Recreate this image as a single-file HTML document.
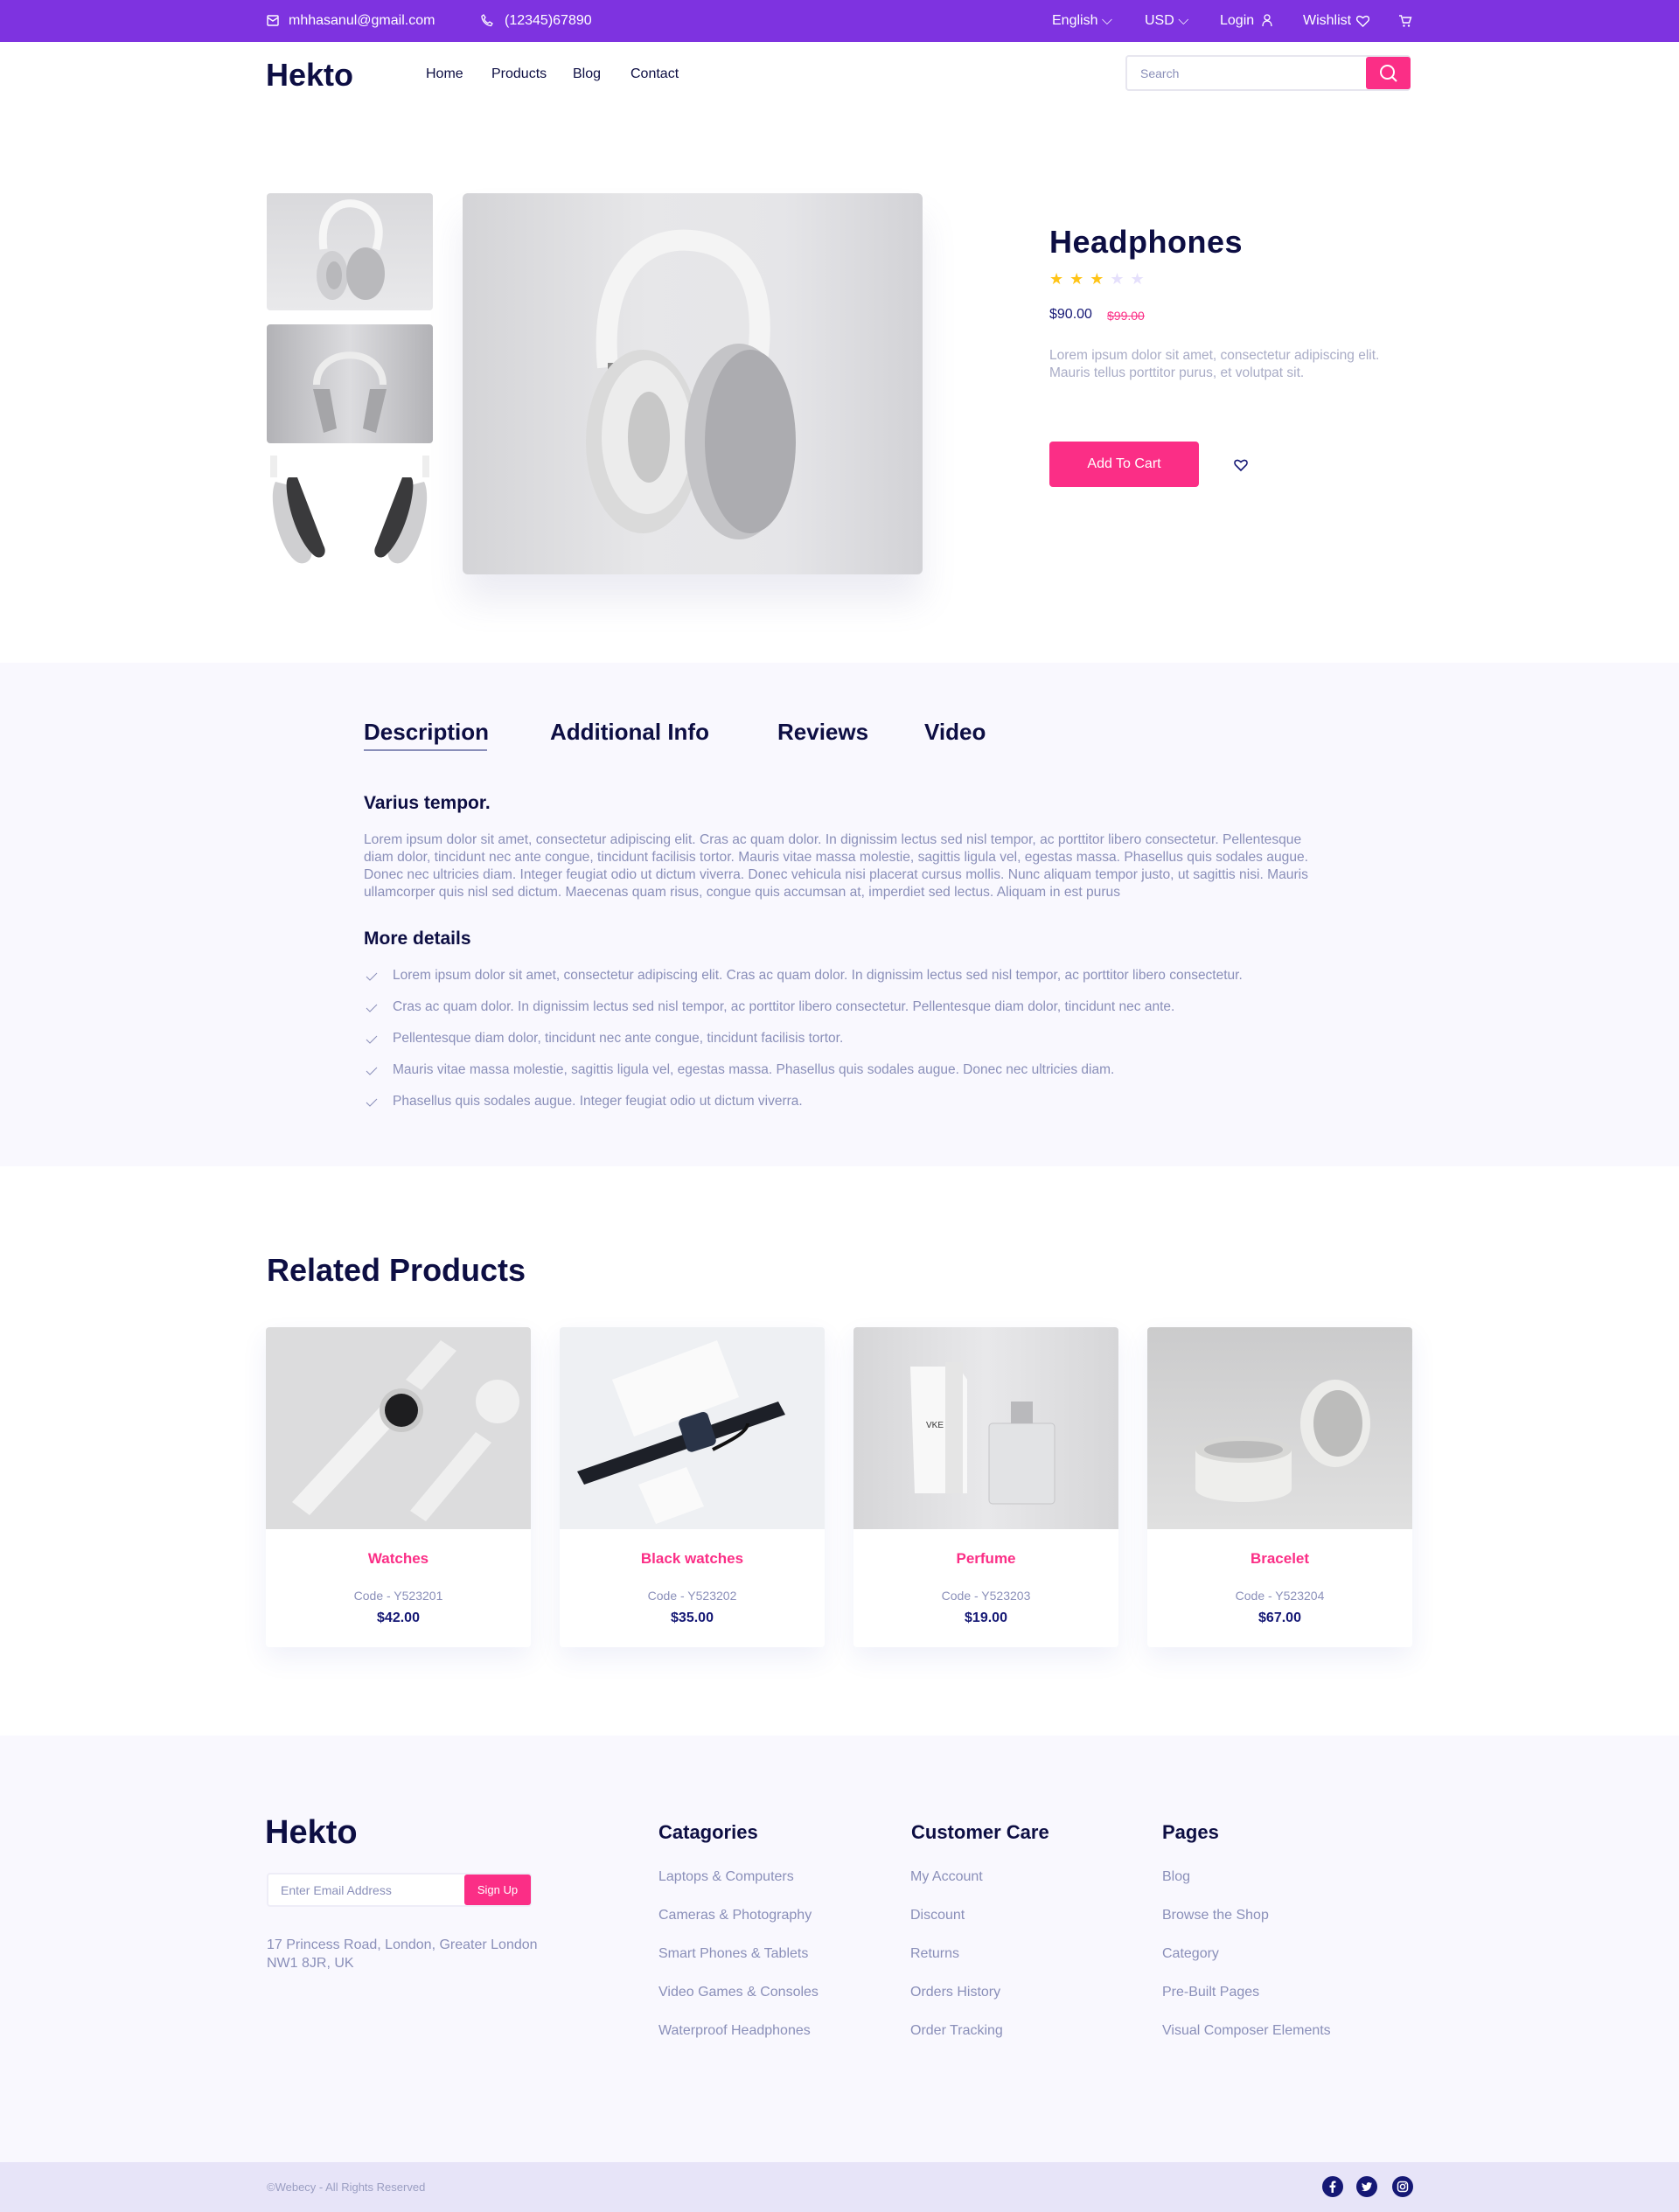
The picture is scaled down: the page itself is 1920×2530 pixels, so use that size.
<!DOCTYPE html>
<html><head><meta charset="utf-8"><style>
*{margin:0;padding:0;box-sizing:border-box}
body{width:1920px;height:2530px;position:relative;background:#fff;font-family:"Liberation Sans",sans-serif;color:#0D0E43;overflow:hidden}
.a{position:absolute;white-space:nowrap}
.top{position:absolute;left:0;top:0;width:1920px;height:48px;background:#7E33E0;color:#fff;font-size:16px}
.card{position:absolute;top:1518px;width:303px;height:366px;background:#fff;border-radius:4px;box-shadow:0 12px 30px rgba(49,64,180,.08);text-align:center}
.card .img{height:231px;border-radius:4px 4px 0 0}
.card .n{position:absolute;left:0;right:0;top:255px;color:#FB2E86;font-size:17px;font-weight:bold}
.card .c{position:absolute;left:0;right:0;top:299px;color:#8A8FB9;font-size:14px}
.card .p{position:absolute;left:0;right:0;top:324px;color:#151875;font-size:16px;font-weight:bold}
.fl{position:absolute;font-size:16px;color:#8A8FB9}
.fh{position:absolute;top:2083px;font-size:22px;font-weight:bold;color:#0D0E43}
.li{position:absolute;left:449px;font-size:15.5px;color:#8A8FB9}
.ck{position:absolute;left:418px;width:14px;height:10px}
</style></head><body>
<div class="top">
 <svg class="a" style="left:305px;top:17px" width="14" height="13" viewBox="0 0 14 13"><rect x="1" y="1" width="12" height="11" rx="1" fill="none" stroke="#fff" stroke-width="1.4"/><path d="M1 3l6 4 6-4" fill="none" stroke="#fff" stroke-width="1.4"/></svg>
 <span class="a" style="left:330px;top:15px">mhhasanul@gmail.com</span>
 <svg class="a" style="left:550px;top:16px" width="14" height="15" viewBox="0 0 14 15"><path d="M3 1l2 3-1.5 2c1 2 2.5 3.5 4.5 4.5l2-1.5 3 2-1.5 2.5C6 13 1 8 1 2.5z" fill="none" stroke="#fff" stroke-width="1.3"/></svg>
 <span class="a" style="left:577px;top:15px">(12345)67890</span>
 <span class="a" style="left:1203px;top:15px">English ⌵</span>
 <span class="a" style="left:1309px;top:15px">USD ⌵</span>
 <span class="a" style="left:1395px;top:15px">Login</span>
 <svg class="a" style="left:1443px;top:16px" width="12" height="15" viewBox="0 0 12 15"><circle cx="6" cy="4" r="3" fill="none" stroke="#fff" stroke-width="1.3"/><path d="M1 14c0-4 2-6 5-6s5 2 5 6" fill="none" stroke="#fff" stroke-width="1.3"/></svg>
 <span class="a" style="left:1490px;top:15px">Wishlist</span>
 <svg class="a" style="left:1551px;top:17px" width="15" height="14" viewBox="0 0 15 14"><path d="M7.5 13L1.5 7C-1 4 2-1 7.5 3.5 13-1 16 4 13.5 7z" fill="none" stroke="#fff" stroke-width="1.4"/></svg>
 <svg class="a" style="left:1599px;top:16px" width="16" height="16" viewBox="0 0 16 16"><path d="M1 2h2.5l2 8h7l2-6H5" fill="none" stroke="#fff" stroke-width="1.4"/><circle cx="6.5" cy="13.5" r="1.2" fill="#fff"/><circle cx="12" cy="13.5" r="1.2" fill="#fff"/></svg>
</div>
<div class="a" style="left:304px;top:65px;font-size:36px;font-weight:bold">Hekto</div>
<span class="a" style="left:487px;top:76px;font-size:16px">Home</span>
<span class="a" style="left:562px;top:76px;font-size:16px">Products</span>
<span class="a" style="left:655px;top:76px;font-size:16px">Blog</span>
<span class="a" style="left:721px;top:76px;font-size:16px">Contact</span>
<div class="a" style="left:1287px;top:63px;width:326px;height:41px;border:2px solid #E7E6EF;border-radius:4px"></div>
<span class="a" style="left:1304px;top:76px;font-size:14px;color:#8A8FB9">Search</span>
<div class="a" style="left:1562px;top:65px;width:51px;height:37px;background:#FB2E86;border-radius:3px"><svg style="position:absolute;left:15px;top:8px" width="22" height="22" viewBox="0 0 22 22"><circle cx="9.5" cy="9.5" r="7.5" fill="none" stroke="#fff" stroke-width="2"/><path d="M15 15l5 5" stroke="#fff" stroke-width="2"/></svg></div>

<div class="a" style="left:305px;top:221px;width:190px;height:134px;border-radius:4px;background:linear-gradient(#d9d9dc,#e9e9eb)"></div>
<svg class="a" style="left:350px;top:225px" width="100" height="125" viewBox="0 0 100 125"><path d="M20 60C15 20 35 5 55 8s35 20 25 52" fill="none" stroke="#f6f6f6" stroke-width="9"/><ellipse cx="30" cy="90" rx="18" ry="28" fill="#cfcfd2"/><ellipse cx="32" cy="90" rx="9" ry="16" fill="#b8b8bb"/><ellipse cx="68" cy="88" rx="22" ry="30" fill="#b9b9bc"/></svg>
<div class="a" style="left:305px;top:371px;width:190px;height:136px;border-radius:4px;background:linear-gradient(90deg,#b2b2b6,#dcdcdf 50%,#b2b2b6)"></div>
<svg class="a" style="left:340px;top:375px" width="120" height="130" viewBox="0 0 120 130"><path d="M22 65C22 20 98 20 98 65" fill="none" stroke="#ececec" stroke-width="8"/><path d="M18 70l12 50 15-5-8-45z" fill="#a5a5a8"/><path d="M102 70l-12 50-15-5 8-45z" fill="#a5a5a8"/></svg>
<svg class="a" style="left:305px;top:521px" width="190" height="126" viewBox="0 0 190 126"><path d="M4 0h8v25H4z" fill="#eee"/><path d="M178 0h8v25h-8z" fill="#eee"/><path d="M10 30c-10 20 5 80 25 92 10 5 20-5 15-15L30 35z" fill="#cfcfd1"/><path d="M25 25c-8 5 5 70 30 90 8 5 15-3 10-12L35 25z" fill="#3a3a3c"/><path d="M180 30c10 20-5 80-25 92-10 5-20-5-15-15l20-72z" fill="#cfcfd1"/><path d="M165 25c8 5-5 70-30 90-8 5-15-3-10-12l30-78z" fill="#3a3a3c"/></svg>
<div class="a" style="left:529px;top:221px;width:526px;height:436px;border-radius:6px;background:linear-gradient(90deg,#d4d4d7,#e7e7e9 40%,#e5e5e8 70%,#d2d2d6);box-shadow:0 30px 40px rgba(120,120,170,.14)"></div>
<svg class="a" style="left:640px;top:260px" width="300" height="360" viewBox="0 0 300 360"><path d="M55 160C45 60 90 10 150 15s90 50 75 145" fill="none" stroke="#f4f4f4" stroke-width="24"/><rect x="55" y="155" width="8" height="22" fill="#888"/><rect x="222" y="155" width="8" height="22" fill="#888"/><ellipse cx="95" cy="245" rx="65" ry="105" fill="#dadada"/><ellipse cx="100" cy="240" rx="52" ry="88" fill="#ececec"/><ellipse cx="102" cy="240" rx="24" ry="52" fill="#c8c8c8"/><ellipse cx="205" cy="245" rx="62" ry="112" fill="#c4c4c7"/><ellipse cx="218" cy="245" rx="52" ry="105" fill="#acacb0"/></svg>

<div class="a" style="left:1200px;top:256px;font-size:36px;font-weight:bold;letter-spacing:.5px">Headphones</div>
<div class="a" style="left:1200px;top:309px;font-size:18px;letter-spacing:7px"><span style="color:#FFC416">★★★</span><span style="color:#E5E0FC">★★</span></div>
<span class="a" style="left:1200px;top:351px;font-size:16px;color:#151875">$90.00</span>
<span class="a" style="left:1266px;top:353px;font-size:14px;color:#FB2E86;text-decoration:line-through">$99.00</span>
<div class="a" style="left:1200px;top:397px;font-size:15.5px;line-height:20px;color:#A9ACC6">Lorem ipsum dolor sit amet, consectetur adipiscing elit.<br>Mauris tellus porttitor purus, et volutpat sit.</div>
<div class="a" style="left:1200px;top:505px;width:171px;height:52px;background:#FB2E86;border-radius:4px;color:#fff;font-size:16px;text-align:center;line-height:52px">Add To Cart</div>
<svg class="a" style="left:1411px;top:525px" width="16" height="14" viewBox="0 0 16 14"><path d="M8 13L2 7C-1 3 3-1 8 3.5 13-1 17 3 14 7z" fill="none" stroke="#151875" stroke-width="1.6"/></svg>

<div class="a" style="left:0;top:758px;width:1920px;height:576px;background:#F9F8FE"></div>
<span class="a" style="left:416px;top:822px;font-size:26px;font-weight:bold">Description</span>
<div class="a" style="left:416px;top:857px;width:141px;height:2px;background:#8A8FB9"></div>
<span class="a" style="left:629px;top:822px;font-size:26px;font-weight:bold">Additional Info</span>
<span class="a" style="left:889px;top:822px;font-size:26px;font-weight:bold">Reviews</span>
<span class="a" style="left:1057px;top:822px;font-size:26px;font-weight:bold">Video</span>
<span class="a" style="left:416px;top:907px;font-size:21px;font-weight:bold">Varius tempor.</span>
<div class="a" style="left:416px;top:951px;width:1090px;white-space:normal;font-size:15.6px;line-height:20px;color:#8A8FB9">Lorem ipsum dolor sit amet, consectetur adipiscing elit. Cras ac quam dolor. In dignissim lectus sed nisl tempor, ac porttitor libero consectetur. Pellentesque diam dolor, tincidunt nec ante congue, tincidunt facilisis tortor. Mauris vitae massa molestie, sagittis ligula vel, egestas massa. Phasellus quis sodales augue. Donec nec ultricies diam. Integer feugiat odio ut dictum viverra. Donec vehicula nisi placerat cursus mollis. Nunc aliquam tempor justo, ut sagittis nisi. Mauris ullamcorper quis nisl sed dictum. Maecenas quam risus, congue quis accumsan at, imperdiet sed lectus. Aliquam in est purus</div>
<span class="a" style="left:416px;top:1062px;font-size:21px;font-weight:bold">More details</span>
<svg class="ck" style="top:1112px" viewBox="0 0 14 10"><path d="M1 5l4 4 8-8" fill="none" stroke="#8A8FB9" stroke-width="1"/></svg>
<span class="li a" style="top:1107px">Lorem ipsum dolor sit amet, consectetur adipiscing elit. Cras ac quam dolor. In dignissim lectus sed nisl tempor, ac porttitor libero consectetur.</span>
<svg class="ck" style="top:1148px" viewBox="0 0 14 10"><path d="M1 5l4 4 8-8" fill="none" stroke="#8A8FB9" stroke-width="1"/></svg>
<span class="li a" style="top:1143px">Cras ac quam dolor. In dignissim lectus sed nisl tempor, ac porttitor libero consectetur. Pellentesque diam dolor, tincidunt nec ante.</span>
<svg class="ck" style="top:1184px" viewBox="0 0 14 10"><path d="M1 5l4 4 8-8" fill="none" stroke="#8A8FB9" stroke-width="1"/></svg>
<span class="li a" style="top:1179px">Pellentesque diam dolor, tincidunt nec ante congue, tincidunt facilisis tortor.</span>
<svg class="ck" style="top:1220px" viewBox="0 0 14 10"><path d="M1 5l4 4 8-8" fill="none" stroke="#8A8FB9" stroke-width="1"/></svg>
<span class="li a" style="top:1215px">Mauris vitae massa molestie, sagittis ligula vel, egestas massa. Phasellus quis sodales augue. Donec nec ultricies diam.</span>
<svg class="ck" style="top:1256px" viewBox="0 0 14 10"><path d="M1 5l4 4 8-8" fill="none" stroke="#8A8FB9" stroke-width="1"/></svg>
<span class="li a" style="top:1251px">Phasellus quis sodales augue. Integer feugiat odio ut dictum viverra.</span>

<div class="a" style="left:305px;top:1432px;font-size:36px;font-weight:bold">Related Products</div>
<div class="card" style="left:304px"><div class="img" style="background:#dcdcdd;position:relative"><svg style="position:absolute;left:0;top:0" width="303" height="231" viewBox="0 0 303 231"><path d="M30 200L150 70l20 15L50 215z" fill="#f2f2f2"/><path d="M160 60l40-45 18 12-40 45z" fill="#eee"/><circle cx="155" cy="95" r="25" fill="#c8c8c8"/><circle cx="155" cy="95" r="19" fill="#1e1e20"/><path d="M165 210l75-90 18 12-75 90z" fill="#efefef"/><circle cx="265" cy="85" r="25" fill="#f0f0f0"/></svg></div><div class="n">Watches</div><div class="c">Code - Y523201</div><div class="p">$42.00</div></div>
<div class="card" style="left:640px"><div class="img" style="background:#eef0f3;position:relative"><svg style="position:absolute;left:0;top:0" width="303" height="231" viewBox="0 0 303 231"><path d="M60 60l120-45 25 65-120 45z" fill="#fafafa"/><path d="M20 165l230-80 8 15-230 80z" fill="#1d2028"/><rect x="140" y="100" width="35" height="40" rx="6" fill="#2a3448" transform="rotate(-18 157 120)"/><path d="M90 180l55-20 20 45-55 20z" fill="#fafafa"/><path d="M175 140c20-10 40-20 40-30" fill="none" stroke="#111" stroke-width="4"/></svg></div><div class="n">Black watches</div><div class="c">Code - Y523202</div><div class="p">$35.00</div></div>
<div class="card" style="left:976px"><div class="img" style="background:linear-gradient(90deg,#d6d6d8,#e8e8ea,#d6d6d8);position:relative"><svg style="position:absolute;left:0;top:0" width="303" height="231" viewBox="0 0 303 231"><path d="M65 45h55l10 15v130H70z" fill="#f8f8f8"/><rect x="105" y="40" width="20" height="150" fill="#e5e5e5"/><rect x="155" y="110" width="75" height="92" rx="4" fill="#e2e3e5" stroke="#c5c5c8"/><rect x="180" y="85" width="25" height="25" fill="#b9b9bc"/><text x="83" y="115" font-size="10" fill="#333" font-family="Liberation Sans">VKE</text></svg></div><div class="n">Perfume</div><div class="c">Code - Y523203</div><div class="p">$19.00</div></div>
<div class="card" style="left:1312px"><div class="img" style="background:linear-gradient(#cbcbcc,#e0e0e0);position:relative"><svg style="position:absolute;left:0;top:0" width="303" height="231" viewBox="0 0 303 231"><path d="M55 140h110v45a55 15 0 0 1-110 0z" fill="#eeeeec"/><ellipse cx="110" cy="140" rx="55" ry="15" fill="#d8d8d6"/><ellipse cx="110" cy="140" rx="45" ry="10" fill="#bbb"/><ellipse cx="215" cy="110" rx="40" ry="50" fill="#ececea"/><ellipse cx="218" cy="110" rx="28" ry="38" fill="#bcbcbb"/></svg></div><div class="n">Bracelet</div><div class="c">Code - Y523204</div><div class="p">$67.00</div></div>

<div class="a" style="left:0;top:1985px;width:1920px;height:488px;background:#F9F8FE"></div>
<div class="a" style="left:303px;top:2075px;font-size:38px;font-weight:bold">Hekto</div>
<div class="a" style="left:305px;top:2142px;width:303px;height:39px;background:#fff;border:2px solid #EEEDF7;border-radius:4px"></div>
<span class="a" style="left:321px;top:2154px;font-size:14px;color:#8A8FB9">Enter Email Address</span>
<div class="a" style="left:531px;top:2144px;width:76px;height:35px;background:#FB2E86;border-radius:3px;color:#fff;font-size:13px;text-align:center;line-height:35px">Sign Up</div>
<div class="a" style="left:305px;top:2214px;font-size:16px;line-height:21px;color:#8A8FB9">17 Princess Road, London, Greater London<br>NW1 8JR, UK</div>
<div class="fh" style="left:753px">Catagories</div>
<div class="fh" style="left:1042px">Customer Care</div>
<div class="fh" style="left:1329px">Pages</div>
<span class="fl a" style="left:753px;top:2138px">Laptops &amp; Computers</span>
<span class="fl a" style="left:753px;top:2182px">Cameras &amp; Photography</span>
<span class="fl a" style="left:753px;top:2226px">Smart Phones &amp; Tablets</span>
<span class="fl a" style="left:753px;top:2270px">Video Games &amp; Consoles</span>
<span class="fl a" style="left:753px;top:2314px">Waterproof Headphones</span>
<span class="fl a" style="left:1041px;top:2138px">My Account</span>
<span class="fl a" style="left:1041px;top:2182px">Discount</span>
<span class="fl a" style="left:1041px;top:2226px">Returns</span>
<span class="fl a" style="left:1041px;top:2270px">Orders History</span>
<span class="fl a" style="left:1041px;top:2314px">Order Tracking</span>
<span class="fl a" style="left:1329px;top:2138px">Blog</span>
<span class="fl a" style="left:1329px;top:2182px">Browse the Shop</span>
<span class="fl a" style="left:1329px;top:2226px">Category</span>
<span class="fl a" style="left:1329px;top:2270px">Pre-Built Pages</span>
<span class="fl a" style="left:1329px;top:2314px">Visual Composer Elements</span>
<div class="a" style="left:0;top:2473px;width:1920px;height:57px;background:#E7E4F8"></div>
<span class="a" style="left:305px;top:2494px;font-size:13px;color:#9A9EC2">©Webecy - All Rights Reserved</span>
<svg class="a" style="left:1512px;top:2489px" width="24" height="24" viewBox="0 0 24 24"><circle cx="12" cy="12" r="12" fill="#151875"/><path d="M13 19v-6h2l.4-2.5H13V9c0-.7.3-1.2 1.3-1.2h1.2V5.6c-.5 0-1.2-.1-1.9-.1-2 0-3.1 1.2-3.1 3.2v1.8H8.5V13h2v6z" fill="#fff"/></svg>
<svg class="a" style="left:1551px;top:2489px" width="24" height="24" viewBox="0 0 24 24"><circle cx="12" cy="12" r="12" fill="#151875"/><path d="M18 8.2c-.5.2-1 .3-1.4.4.5-.3.9-.8 1.1-1.3-.5.3-1 .5-1.600.6a2.500 2.500 0 0 0-4.300 2.300C9.700 10 8 9.100 6.800 7.700c-.7 1.200-.3 2.600.8 3.300-.4 0-.8-.1-1.100-.3 0 1.200.9 2.200 2 2.500-.4.100-.8.100-1.100 0 .3 1 1.300 1.700 2.300 1.700A5 5 0 0 1 6 16c1.100.7 2.400 1.100 3.800 1.100 4.600 0 7.200-3.900 7.100-7.300.5-.4.900-.8 1.100-1.600z" fill="#fff"/></svg>
<svg class="a" style="left:1592px;top:2489px" width="24" height="24" viewBox="0 0 24 24"><circle cx="12" cy="12" r="12" fill="#151875"/><rect x="6.5" y="6.5" width="11" height="11" rx="3" fill="none" stroke="#fff" stroke-width="1.5"/><circle cx="12" cy="12" r="2.6" fill="none" stroke="#fff" stroke-width="1.5"/><circle cx="15.3" cy="8.7" r=".8" fill="#fff"/></svg>
</body></html>
